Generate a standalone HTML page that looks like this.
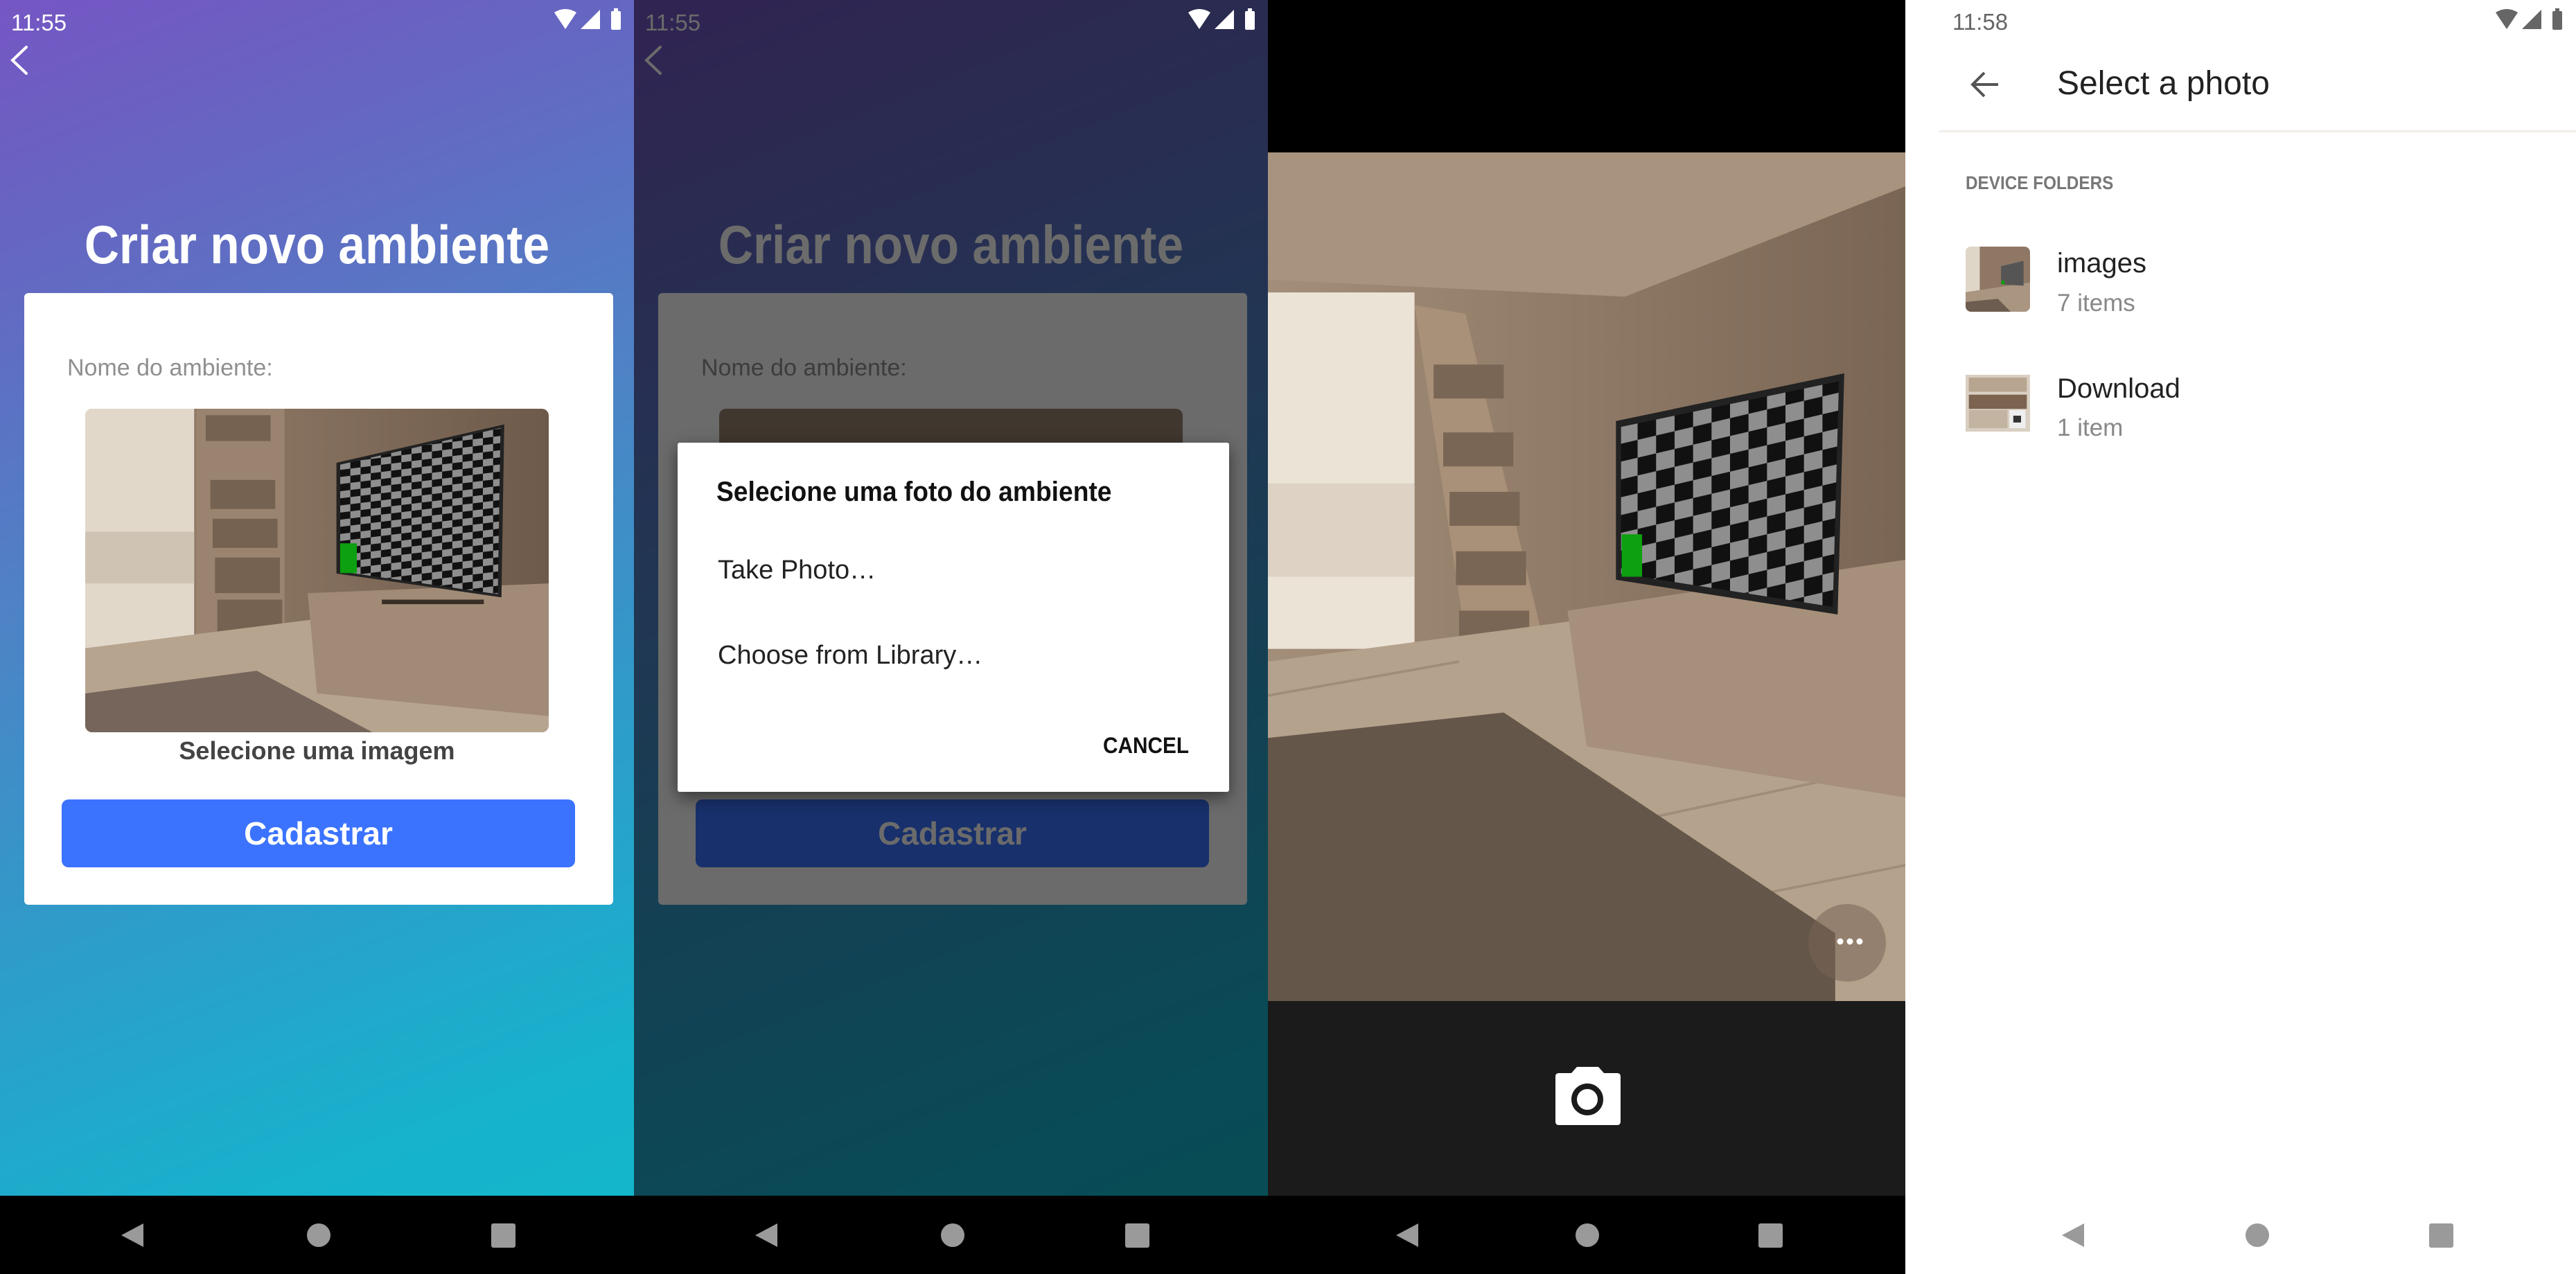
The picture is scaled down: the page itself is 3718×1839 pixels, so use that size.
<!DOCTYPE html>
<html><head><meta charset="utf-8">
<style>
*{margin:0;padding:0;box-sizing:border-box}
body{width:3718px;height:1839px;position:relative;overflow:hidden;background:#fff;font-family:"Liberation Sans",Arial,sans-serif}
.abs{position:absolute}
.p{position:absolute;top:0;height:1839px;overflow:hidden}
.grad{background:linear-gradient(158deg,#7556c3 0%,#6468c2 18%,#4f82c6 40%,#2f9bc9 62%,#17b2cc 85%,#12b9cc 100%)}
.nav{position:absolute;left:0;right:0;top:1726px;height:113px;background:#000}
.t{position:absolute;white-space:nowrap}
</style></head><body>

<!-- PANEL 1 -->
<div class="p grad" style="left:0;width:915px">
  <div class="t" style="left:16px;top:14px;font-size:33px;color:#fff">11:55</div>
  <svg class="abs" style="left:798px;top:12px" width="104" height="34" viewBox="0 0 104 34"><path d="M2 6 Q18 -4 34 6 L18 30 Z" fill="#fff"/><path d="M40 30 L68 2 L68 30 Z" fill="#fff"/><rect x="84" y="4" width="14" height="27" rx="2" fill="#fff"/><rect x="88" y="0" width="6" height="5" fill="#fff"/></svg>
  <svg class="abs" style="left:10px;top:64px" width="34" height="46"><path d="M28 4 L8 23 L28 42" stroke="#fff" stroke-width="4" fill="none" stroke-linecap="round"/></svg>
  <div class="t" style="left:0;width:915px;text-align:center;top:308px;font-size:78px;font-weight:bold;color:#fff;transform:scaleX(0.89)">Criar novo ambiente</div>
  <div class="abs" style="left:35px;top:423px;width:850px;height:883px;background:#fff;border-radius:6px"></div>
  <div class="t" style="left:97px;top:512px;font-size:34px;color:#8f8f8f">Nome do ambiente:</div>
  <svg class="abs" style="left:123px;top:590px;border-radius:10px" width="669" height="467" viewBox="0 0 1000 1000" preserveAspectRatio="none">
    <defs><pattern id="ck1" width="44" height="44" patternUnits="userSpaceOnUse" patternTransform="skewY(-10)"><rect width="44" height="44" fill="#8e8e8e"/><rect width="22" height="22" fill="#111"/><rect x="22" y="22" width="22" height="22" fill="#111"/></pattern>
    <linearGradient id="w1" x1="0" x2="1"><stop offset="0" stop-color="#9a8470"/><stop offset="1" stop-color="#6e5a4a"/></linearGradient></defs>
    <rect width="1000" height="1000" fill="url(#w1)"/>
    <rect x="0" y="0" width="235" height="740" fill="#e2d8ca"/>
    <rect x="0" y="380" width="235" height="160" fill="#cfc3b3"/>
    <rect x="240" y="0" width="190" height="700" fill="#9a8470"/>
    <g fill="#756250"><rect x="260" y="20" width="140" height="80"/><rect x="270" y="220" width="140" height="90"/><rect x="275" y="340" width="140" height="90"/><rect x="280" y="460" width="140" height="110"/><rect x="285" y="590" width="140" height="100"/></g>
    <polygon points="0,740 1000,560 1000,1000 0,1000" fill="#b7a48f"/>
    <polygon points="0,880 370,810 620,1000 0,1000" fill="#74635400"/>
    <polygon points="0,880 370,810 620,1000 0,1000" fill="#76655a"/>
    <polygon points="480,570 1000,540 1000,950 500,880" fill="#a18b76"/>
    <polygon points="546,170 900,54 894,578 546,506" fill="url(#ck1)" stroke="#222" stroke-width="8"/>
    <rect x="550" y="416" width="36" height="92" fill="#0da010"/>
    <rect x="640" y="590" width="220" height="14" fill="#3a2f27"/>
  </svg>
  <div class="t" style="left:0;width:915px;text-align:center;top:1063px;font-size:36px;font-weight:bold;color:#444">Selecione uma imagem</div>
  <div class="abs" style="left:89px;top:1154px;width:741px;height:98px;background:#3b73ff;border-radius:10px"></div>
  <div class="t" style="left:89px;width:741px;text-align:center;top:1176px;font-size:46px;font-weight:bold;color:#fff">Cadastrar</div>
  <div class="nav"><svg width="915" height="113"><polygon points="175,57 207,40 207,74" fill="#9a9a9a"/><circle cx="460" cy="57" r="17" fill="#9a9a9a"/><rect x="709" y="40" width="35" height="35" rx="3" fill="#9a9a9a"/></svg></div>
</div>

<!-- PANEL 2 -->
<div class="p grad" style="left:915px;width:915px">
  <div class="t" style="left:16px;top:14px;font-size:33px;color:#fff">11:55</div>
  <div class="t" style="left:0;width:915px;text-align:center;top:308px;font-size:78px;font-weight:bold;color:#fff;transform:scaleX(0.89)">Criar novo ambiente</div>
  <div class="abs" style="left:35px;top:423px;width:850px;height:883px;background:#fff;border-radius:6px"></div>
  <div class="t" style="left:97px;top:512px;font-size:34px;color:#8f8f8f">Nome do ambiente:</div>
  <div class="abs" style="left:123px;top:590px;width:669px;height:467px;background:#9a8470;border-radius:10px"></div>
  <div class="abs" style="left:89px;top:1154px;width:741px;height:98px;background:#3b73ff;border-radius:10px"></div>
  <div class="t" style="left:89px;width:741px;text-align:center;top:1176px;font-size:46px;font-weight:bold;color:#fff">Cadastrar</div>
  <svg class="abs" style="left:10px;top:64px" width="34" height="46"><path d="M28 4 L8 23 L28 42" stroke="#fff" stroke-width="4" fill="none" stroke-linecap="round"/></svg>
  <div class="abs" style="left:0;top:0;width:915px;height:1839px;background:rgba(0,0,0,0.58)"></div>
  <svg class="abs" style="left:798px;top:12px" width="104" height="34" viewBox="0 0 104 34"><path d="M2 6 Q18 -4 34 6 L18 30 Z" fill="#fff"/><path d="M40 30 L68 2 L68 30 Z" fill="#fff"/><rect x="84" y="4" width="14" height="27" rx="2" fill="#fff"/><rect x="88" y="0" width="6" height="5" fill="#fff"/></svg>
  <div class="abs" style="left:63px;top:639px;width:796px;height:504px;background:#fff;border-radius:3px;box-shadow:0 8px 24px rgba(0,0,0,0.5)"></div>
  <div class="t" style="left:119px;top:688px;font-size:40px;font-weight:bold;color:#111;transform:scaleX(0.93);transform-origin:left">Selecione uma foto do ambiente</div>
  <div class="t" style="left:121px;top:802px;font-size:38px;color:#222">Take Photo…</div>
  <div class="t" style="left:121px;top:925px;font-size:38px;color:#222">Choose from Library…</div>
  <div class="t" style="left:677px;top:1058px;font-size:32px;font-weight:bold;color:#111;transform:scaleX(0.93);transform-origin:left">CANCEL</div>
  <div class="nav"><svg width="915" height="113"><polygon points="175,57 207,40 207,74" fill="#9a9a9a"/><circle cx="460" cy="57" r="17" fill="#9a9a9a"/><rect x="709" y="40" width="35" height="35" rx="3" fill="#9a9a9a"/></svg></div>
</div>

<!-- PANEL 3 -->
<div class="p" style="left:1830px;width:920px;background:#000">
  <svg class="abs" style="left:0;top:220px" width="920" height="1225" viewBox="0 0 1000 1000" preserveAspectRatio="none">
    <defs><pattern id="ck3" width="58" height="42" patternUnits="userSpaceOnUse" patternTransform="skewY(-10)"><rect width="58" height="42" fill="#8e8e8e"/><rect width="29" height="21" fill="#111"/><rect x="29" y="21" width="29" height="21" fill="#111"/></pattern>
    <linearGradient id="w3" x1="0" x2="1"><stop offset="0" stop-color="#a38e79"/><stop offset="1" stop-color="#7a6554"/></linearGradient></defs>
    <rect width="1000" height="1000" fill="url(#w3)"/>
    <polygon points="0,0 1000,0 1000,40 560,170 0,150" fill="#a8937e"/>
    <rect x="0" y="165" width="230" height="420" fill="#ece3d7"/>
    <rect x="0" y="390" width="230" height="110" fill="#ddd2c4"/>
    <polygon points="230,180 310,190 440,600 320,620" fill="#a89079"/>
    <g fill="#7a6654"><rect x="260" y="250" width="110" height="40"/><rect x="275" y="330" width="110" height="40"/><rect x="285" y="400" width="110" height="40"/><rect x="295" y="470" width="110" height="40"/><rect x="300" y="540" width="110" height="35"/></g>
    <polygon points="0,600 1000,500 1000,1000 0,1000" fill="#b5a28d"/>
    <g stroke="#a08c78" stroke-width="3"><line x1="0" y1="640" x2="300" y2="600"/><line x1="500" y1="800" x2="1000" y2="720"/><line x1="600" y1="900" x2="1000" y2="840"/></g>
    <polygon points="0,690 370,660 890,920 890,1000 0,1000" fill="#65564a"/>
    <polygon points="470,540 1000,480 1000,760 500,700" fill="#a6907b"/>
    <polygon points="550,320 900,265 890,540 550,500" fill="url(#ck3)" stroke="#222" stroke-width="8"/>
    <rect x="555" y="450" width="32" height="50" fill="#0da010"/>
  </svg>
  <div class="abs" style="left:780px;top:1305px;width:112px;height:112px;border-radius:50%;background:rgba(120,100,85,0.55)"></div>
  <svg class="abs" style="left:820px;top:1352px" width="40" height="14"><circle cx="6" cy="7" r="4.5" fill="#fff"/><circle cx="20" cy="7" r="4.5" fill="#fff"/><circle cx="34" cy="7" r="4.5" fill="#fff"/></svg>
  <div class="abs" style="left:0;top:1445px;width:920px;height:281px;background:#1b1b1b"></div>
  <svg class="abs" style="left:414px;top:1539px" width="96" height="86" viewBox="0 0 96 86"><path d="M6 10 H24 L32 1 H63 L71 10 H90 Q95 10 95 15 V80 Q95 85 90 85 H6 Q1 85 1 80 V15 Q1 10 6 10 Z" fill="#fff"/><circle cx="47" cy="48" r="19" fill="none" stroke="#1b1b1b" stroke-width="8"/></svg>
  <div class="nav"><svg width="920" height="113"><polygon points="185,57 217,40 217,74" fill="#9a9a9a"/><circle cx="461" cy="57" r="17" fill="#9a9a9a"/><rect x="708" y="40" width="35" height="35" rx="3" fill="#9a9a9a"/></svg></div>
</div>

<!-- PANEL 4 -->
<div class="p" style="left:2750px;width:968px;background:#fff">
  <div class="t" style="left:68px;top:13px;font-size:33px;color:#666">11:58</div>
  <svg class="abs" style="left:850px;top:12px" width="104" height="34" viewBox="0 0 104 34"><path d="M2 6 Q18 -4 34 6 L18 30 Z" fill="#666"/><path d="M40 30 L68 2 L68 30 Z" fill="#666"/><rect x="84" y="4" width="14" height="27" rx="2" fill="#666"/><rect x="88" y="0" width="6" height="5" fill="#666"/></svg>
  <svg class="abs" style="left:94px;top:102px" width="42" height="40"><path d="M40 20 H4 M20 3 L3 20 L20 37" stroke="#555" stroke-width="4" fill="none"/></svg>
  <div class="t" style="left:219px;top:93px;font-size:48px;color:#222">Select a photo</div>
  <div class="abs" style="left:49px;top:188px;width:919px;height:3px;background:#f1ede9"></div>
  <div class="t" style="left:87px;top:249px;font-size:27px;font-weight:bold;color:#777;transform:scaleX(0.9);transform-origin:left">DEVICE FOLDERS</div>
  <svg class="abs" style="left:87px;top:356px;border-radius:8px" width="93" height="94" viewBox="0 0 100 100" preserveAspectRatio="none"><rect width="100" height="100" fill="#8e7764"/><rect width="22" height="70" fill="#e0d6c8"/><polygon points="0,70 100,55 100,100 0,100" fill="#a99580"/><polygon points="0,85 50,80 70,100 0,100" fill="#6d5d50"/><polygon points="55,30 90,22 90,60 55,58" fill="#555"/><rect x="56" y="52" width="4" height="6" fill="#0a0"/></svg>
  <div class="t" style="left:219px;top:358px;font-size:40px;color:#222">images</div>
  <div class="t" style="left:219px;top:418px;font-size:35px;color:#888">7 items</div>
  <svg class="abs" style="left:87px;top:541px" width="93" height="82" viewBox="0 0 100 100" preserveAspectRatio="none"><rect width="100" height="100" fill="#d9cfc2"/><rect x="5" y="5" width="90" height="25" fill="#b8a58f"/><rect x="5" y="35" width="90" height="25" fill="#7b6350"/><rect x="5" y="62" width="60" height="32" fill="#c3b4a2"/><rect x="68" y="62" width="25" height="32" fill="#eee"/><rect x="74" y="72" width="12" height="12" fill="#333"/></svg>
  <div class="t" style="left:219px;top:539px;font-size:40px;color:#222">Download</div>
  <div class="t" style="left:219px;top:598px;font-size:35px;color:#888">1 item</div>
  <svg class="abs" style="left:0;top:1726px" width="968" height="113"><polygon points="226,57 258,40 258,74" fill="#9a9a9a"/><circle cx="508" cy="57" r="17" fill="#9a9a9a"/><rect x="756" y="40" width="35" height="35" rx="3" fill="#9a9a9a"/></svg>
</div>
</body></html>
